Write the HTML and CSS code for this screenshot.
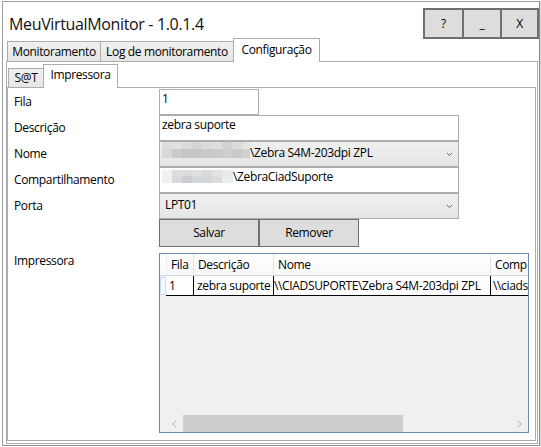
FILE: index.html
```html
<!DOCTYPE html>
<html lang="pt">
<head>
<meta charset="utf-8">
<title>MeuVirtualMonitor</title>
<link rel="stylesheet" href="styles.css">
</head>
<body>
<div class="window">
  <div class="titlebar">
    <div class="title">MeuVirtualMonitor - 1.0.1.4</div>
    <div class="wbtns">
      <div class="wbtn w1">?</div>
      <div class="wbtn w2">_</div>
      <div class="wbtn w3">X</div>
    </div>
  </div>

  <div class="tabctl outer">
    <div class="strip outer-strip">
      <div class="tab t1">Monitoramento</div>
      <div class="tab t2">Log de monitoramento</div>
      <div class="tab t3 sel">Configuração</div>
    </div>
    <div class="panel outer-panel">
      <div class="tabctl inner">
        <div class="strip inner-strip">
          <div class="tab i1">S@T</div>
          <div class="tab i2 sel">Impressora</div>
        </div>
        <div class="panel inner-panel">
          <div class="form">
            <div class="lbl">Fila</div>
            <div class="field short">1</div>

            <div class="lbl">Descrição</div>
            <div class="field">zebra suporte</div>

            <div class="lbl">Nome</div>
            <div class="combo">
              <div class="val">
                <svg class="blur blur-nome" width="88" height="16" viewBox="0 0 88 16">
                  <rect x="0" y="0" width="10" height="7" fill="#dedede"/>
                  <rect x="10" y="0" width="10" height="7" fill="#e2e2e2"/>
                  <rect x="20" y="0" width="10" height="7" fill="#d9d9d9"/>
                  <rect x="30" y="0" width="10" height="7" fill="#d6d6d6"/>
                  <rect x="40" y="0" width="10" height="7" fill="#dadada"/>
                  <rect x="50" y="0" width="10" height="7" fill="#dedede"/>
                  <rect x="60" y="0" width="10" height="7" fill="#d2d2d2"/>
                  <rect x="70" y="0" width="10" height="7" fill="#dadada"/>
                  <rect x="80" y="0" width="8" height="7" fill="#e4e4e4"/>
                  <rect x="0" y="7" width="10" height="9" fill="#d8d8d8"/>
                  <rect x="10" y="7" width="10" height="9" fill="#cbcbcb"/>
                  <rect x="20" y="7" width="10" height="9" fill="#c6c6c6"/>
                  <rect x="30" y="7" width="10" height="9" fill="#c6c6c6"/>
                  <rect x="40" y="7" width="10" height="9" fill="#c9c9c9"/>
                  <rect x="50" y="7" width="10" height="9" fill="#cacaca"/>
                  <rect x="60" y="7" width="10" height="9" fill="#cdcdcd"/>
                  <rect x="70" y="7" width="10" height="9" fill="#c9c9c9"/>
                  <rect x="80" y="7" width="8" height="9" fill="#d2d2d2"/>
                </svg>
                <span>\Zebra S4M-203dpi ZPL</span>
              </div>
              <svg class="chev" width="7" height="5" viewBox="0 0 7 5"><path d="M1 1 L3.5 3.5 L6 1" fill="none" stroke="#606060" stroke-width="1"/></svg>
            </div>

            <div class="lbl">Compartilhamento</div>
            <div class="field flexfield">
              <svg class="blur blur-comp" width="71" height="13" viewBox="0 0 71 13">
                <rect x="0" y="0" width="10" height="6" fill="#f2f2f2"/>
                <rect x="10" y="0" width="10" height="6" fill="#dedede"/>
                <rect x="20" y="0" width="10" height="6" fill="#d9dde0"/>
                <rect x="30" y="0" width="10" height="6" fill="#dfe2e5"/>
                <rect x="40" y="0" width="10" height="6" fill="#dadada"/>
                <rect x="50" y="0" width="10" height="6" fill="#e2e2e2"/>
                <rect x="60" y="0" width="11" height="6" fill="#eaeaea"/>
                <rect x="0" y="6" width="10" height="7" fill="#f0f0f0"/>
                <rect x="10" y="6" width="10" height="7" fill="#d9d9d9"/>
                <rect x="20" y="6" width="10" height="7" fill="#cacdd1"/>
                <rect x="30" y="6" width="10" height="7" fill="#d5d9dd"/>
                <rect x="40" y="6" width="10" height="7" fill="#d2d6da"/>
                <rect x="50" y="6" width="10" height="7" fill="#dddddd"/>
                <rect x="60" y="6" width="11" height="7" fill="#e9eded"/>
              </svg>
              <span>\ZebraCiadSuporte</span>
            </div>

            <div class="lbl">Porta</div>
            <div class="combo">
              <div class="val"><span>LPT01</span></div>
              <svg class="chev" width="7" height="5" viewBox="0 0 7 5"><path d="M1 1 L3.5 3.5 L6 1" fill="none" stroke="#606060" stroke-width="1"/></svg>
            </div>

            <div class="lbl empty"></div>
            <div class="btnrow">
              <div class="btn">Salvar</div>
              <div class="btn">Remover</div>
            </div>

            <div class="lbl lbl-grid">Impressora</div>
            <div class="grid">
              <div class="ghead">
                <div class="hc rh"></div>
                <div class="hc c-fila">Fila</div>
                <div class="hc c-desc">Descrição</div>
                <div class="hc c-nome">Nome</div>
                <div class="hc c-comp">Comp</div>
              </div>
              <div class="grow">
                <div class="rhcell"></div>
                <div class="cells">
                  <div class="dc c-fila1">1</div>
                  <div class="dc c-desc">zebra suporte</div>
                  <div class="dc c-nome nome-data">\\CIADSUPORTE\Zebra S4M-203dpi ZPL</div>
                  <div class="dc c-comp">\\ciads</div>
                </div>
              </div>
              <div class="hscroll">
                <div class="sbtn"><svg width="5" height="8" viewBox="0 0 5 8"><path d="M4 0.5 L0.8 4 L4 7.5" fill="none" stroke="#a6a6a6" stroke-width="1"/></svg></div>
                <div class="thumb"></div>
                <div class="track"></div>
                <div class="sbtn"><svg width="5" height="8" viewBox="0 0 5 8"><path d="M1 0.5 L4.2 4 L1 7.5" fill="none" stroke="#a6a6a6" stroke-width="1"/></svg></div>
              </div>
            </div>
          </div>
        </div>
      </div>
    </div>
  </div>
</div>
</body>
</html>
```

FILE: styles.css
```css
* { box-sizing: border-box; }

body {
  margin: 0;
  background: #ffffff;
  font-family: "Open Sans", "Noto Sans", sans-serif;
  font-size: 12px;
  letter-spacing: -0.35px;
  color: #000;
}

.window {
  margin: 1px 0 0 2px;
  width: 538px;
  height: 445px;
  border: 1px solid #9c9c9c;
  border-right-color: #8c8c8c;
  border-bottom-color: #8c8c8c;
  box-shadow: 1px 1px 1px rgba(0,0,0,0.15);
  background: #fff;
  display: flex;
  flex-direction: column;
}

/* title bar */
.titlebar {
  height: 37px;
  flex: none;
  display: flex;
  justify-content: space-between;
  align-items: flex-start;
}
.title {
  font-size: 16px;
  line-height: 22px;
  padding: 11px 0 0 6px;
  letter-spacing: -0.35px;
  color: #111;
}
.wbtns {
  margin-top: 6px;
  height: 31px;
  display: flex;
  border: 2px solid #707070;
}
.wbtn {
  background: #dddddd;
  display: flex;
  align-items: center;
  justify-content: center;
  font-size: 12px;
}
.wbtn + .wbtn { border-left: 2px solid #707070; }
.w1 { width: 37px; }
.w2 { width: 38px; }
.w3 { width: 37px; }

/* tab controls */
.tabctl { display: flex; flex-direction: column; }
.strip {
  display: flex;
  align-items: flex-end;
  padding-left: 1px;
  position: relative;
  z-index: 1;
  flex: none;
}
.tab {
  border: 1px solid #acacac;
  border-bottom: none;
  background: linear-gradient(#f0f0f0, #e5e5e5);
  display: flex;
  align-items: center;
  justify-content: center;
  white-space: nowrap;
  line-height: 16px;
}
.tab + .tab { margin-left: -1px; }
.tab.sel { background: #fff; margin-bottom: -1px; }

.panel {
  border: 1px solid #acacac;
  background: #fff;
  flex: 1;
}

.outer { margin-left: 3px; width: 532px; height: 405px; }
.outer-strip { height: 22px; }
.t1 { width: 94px; height: 20px; }
.t2 { width: 134px; height: 20px; }
.t3 { width: 87px; height: 24px; padding-bottom: 2px; }

.inner { width: 529px; height: 379px; }
.inner-strip { height: 25px; }
.i1 { width: 36px; height: 19px; padding-bottom: 1px; }
.i2 { width: 75px; height: 24px; padding-bottom: 3px; }

/* form */
.form {
  display: grid;
  grid-template-columns: 151px 370px;
  padding-top: 1px;
}
.lbl {
  padding-left: 6px;
  line-height: 26px;
  white-space: nowrap;
}
.lbl-grid {
  margin-top: 6px;
  line-height: 16px;
}
.field {
  height: 26px;
  width: 300px;
  border: 1px solid #abadb3;
  background: #fff;
  padding: 1px 2px 0;
  line-height: 16px;
  white-space: nowrap;
}
.field.short { width: 100px; }
.flexfield { display: flex; align-items: flex-start; }
.blur { display: block; flex: none; }
.blur-comp { margin-top: 1px; }

.combo {
  height: 26px;
  width: 300px;
  border: 1px solid #acacac;
  background: linear-gradient(#f0f0f0, #e5e5e5);
  display: flex;
  align-items: center;
  justify-content: space-between;
  padding: 0 5px 2px 5px;
}
.val {
  display: flex;
  align-items: center;
  line-height: 16px;
  white-space: nowrap;
}
.blur-nome { align-self: flex-start; margin: -3px 0 0 -3px; }
.chev { display: block; margin-top: 2px; }

.btnrow { display: flex; }
.btn {
  width: 100px;
  height: 28px;
  border: 1px solid #707070;
  background: #dddddd;
  display: flex;
  align-items: center;
  justify-content: center;
  padding-bottom: 1px;
}

/* data grid */
.grid {
  margin-top: 6px;
  width: 370px;
  height: 180px;
  border: 1px solid #688caf;
  background: #f0f0f0;
  display: flex;
  flex-direction: column;
  overflow: hidden;
}
.ghead {
  display: flex;
  height: 22px;
  flex: none;
  background: linear-gradient(#ffffff, #f7f8f9);
  border-bottom: 1px solid #d5d5d5;
}
.hc {
  flex: none;
  border-right: 1px solid #e2e2e2;
  padding-left: 4px;
  line-height: 21px;
  white-space: nowrap;
  overflow: hidden;
}
.hc.rh { width: 7px; padding: 0; border-right-color: #ececec; }
.c-fila { width: 27px; }
.c-fila1 { width: 28px; }
.c-desc { width: 80px; }
.c-nome { width: 217px; }
.c-comp { width: 37px; border-right: none; }

.grow {
  display: flex;
  height: 20px;
  flex: none;
}
.rhcell {
  width: 6px;
  height: 18px;
  margin-top: 1px;
  border: 1px solid #c6def4;
  background: #f7fbff;
  flex: none;
}
.cells {
  display: flex;
  flex: 1;
  background: #fff;
  border-bottom: 1px solid #000;
}
.dc {
  flex: none;
  border-right: 1px solid #000;
  padding-left: 3px;
  line-height: 19px;
  white-space: nowrap;
  overflow: hidden;
}
.dc.c-comp { border-right: none; padding-left: 2px; }
.nome-data { padding-left: 0; }

.hscroll {
  margin-top: auto;
  height: 17px;
  flex: none;
  display: flex;
  padding-left: 6px;
}
.sbtn {
  width: 17px;
  display: flex;
  align-items: center;
  justify-content: center;
}
.sbtn svg { display: block; }
.thumb { width: 220px; background: #cdcdcd; }
.track { flex: 1; }
```
